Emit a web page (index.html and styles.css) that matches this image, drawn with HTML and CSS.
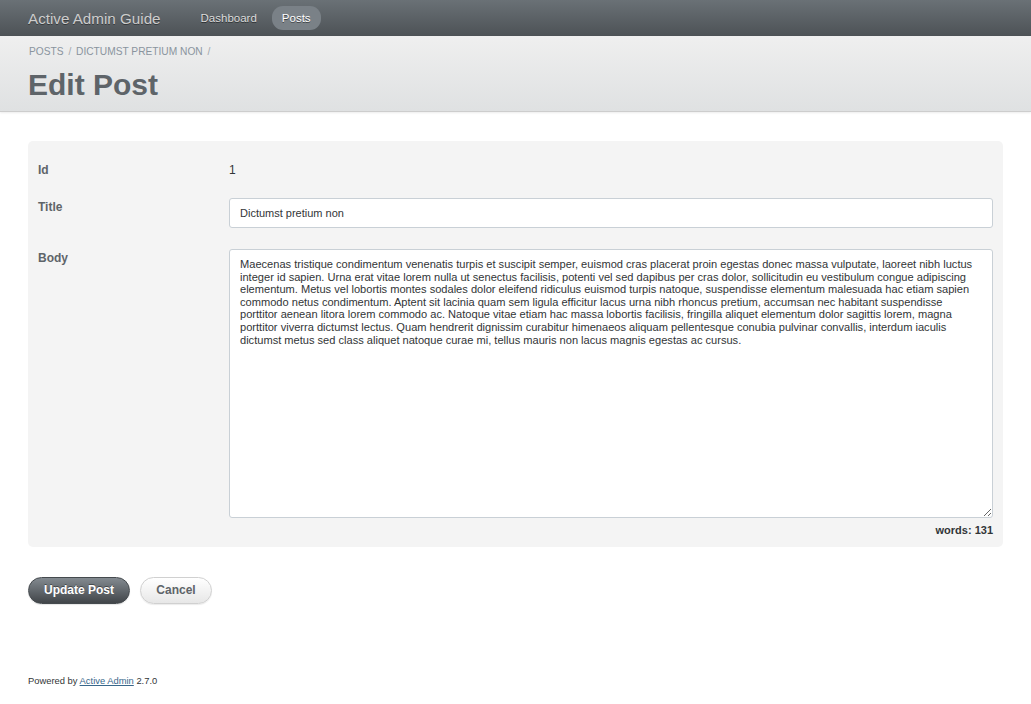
FILE: index.html
```html
<!DOCTYPE html>
<html lang="en">
<head>
    <meta charset="UTF-8">
    <meta name="viewport" content="width=device-width, initial-scale=1.0">
    <link rel="stylesheet" href="styles.css">
    <title>Edit Post | Active Admin Guide</title>
</head>
<body>

    <header class="top-bar">
        <h1 class="site-title">Active Admin Guide</h1>
        <nav class="tabs">
            <a class="tab" href="#">Dashboard</a>
            <a class="tab current" href="#">Posts</a>
        </nav>
    </header>

    <div class="title-bar">
        <div class="breadcrumb">
            <a href="#">Posts</a> <span class="sep">/</span>
            <a href="#">Dictumst pretium non</a> <span class="sep">/</span>
        </div>
        <h2 class="page-title">Edit Post</h2>
    </div>

    <main class="content">
        <form class="post-form">
            <fieldset class="inputs">
                <div class="row">
                    <label class="label">Id</label>
                    <div class="value">1</div>
                </div>
                <div class="row">
                    <label class="label" for="postTitle">Title</label>
                    <input class="field" type="text" id="postTitle" value="Dictumst pretium non">
                </div>
                <div class="row last">
                    <label class="label" for="postBody">Body</label>
                    <div class="field-wrap">
                        <textarea class="field area" id="postBody">Maecenas tristique condimentum venenatis turpis et suscipit semper, euismod cras placerat proin egestas donec massa vulputate, laoreet nibh luctus integer id sapien. Urna erat vitae lorem nulla ut senectus facilisis, potenti vel sed dapibus per cras dolor, sollicitudin eu vestibulum congue adipiscing elementum. Metus vel lobortis montes sodales dolor eleifend ridiculus euismod turpis natoque, suspendisse elementum malesuada hac etiam sapien commodo netus condimentum. Aptent sit lacinia quam sem ligula efficitur lacus urna nibh rhoncus pretium, accumsan nec habitant suspendisse porttitor aenean litora lorem commodo ac. Natoque vitae etiam hac massa lobortis facilisis, fringilla aliquet elementum dolor sagittis lorem, magna porttitor viverra dictumst lectus. Quam hendrerit dignissim curabitur himenaeos aliquam pellentesque conubia pulvinar convallis, interdum iaculis dictumst metus sed class aliquet natoque curae mi, tellus mauris non lacus magnis egestas ac cursus.</textarea>
                        <p class="hint">words: 131</p>
                    </div>
                </div>
            </fieldset>

            <div class="actions">
                <button type="button" class="btn primary">Update Post</button>
                <a href="#" class="btn secondary">Cancel</a>
            </div>
        </form>
    </main>

    <footer class="footer">
        Powered by <a href="#">Active Admin</a> 2.7.0
    </footer>

</body>
</html>
```

FILE: styles.css
```css
body {
    font-family: "Liberation Sans", Arial, Helvetica, sans-serif;
    font-size: 12px;
    margin: 0;
    padding: 0;
    background-color: #ffffff;
    color: #323537;
}

a {
    color: #38678b;
}

.top-bar {
    display: flex;
    align-items: center;
    height: 36px;
    padding: 0 28px;
    background: linear-gradient(180deg, #6a7176 0%, #4d5256 100%);
}

.site-title {
    margin: 0 30px 0 0;
    font-size: 15.2px;
    font-weight: normal;
    color: #cdcdcd;
    text-shadow: 0 1px 0 rgba(0, 0, 0, 0.4);
}

.tabs {
    display: flex;
    gap: 5px;
}

.tab {
    padding: 6px 10px;
    border-radius: 11px;
    font-size: 11.5px;
    color: #dcdcdc;
    text-decoration: none;
    text-shadow: 0 1px 0 rgba(0, 0, 0, 0.5);
}

.tab.current {
    background-color: #7a8187;
    color: #ffffff;
}

.title-bar {
    height: 76px;
    padding: 0 28px;
    box-sizing: border-box;
    background: linear-gradient(180deg, #efefef 0%, #dfe1e2 100%);
    border-bottom: 1px solid #cdcdcd;
    box-shadow: 0 1px 2px rgba(0, 0, 0, 0.08);
}

.breadcrumb {
    padding-top: 10px;
    padding-left: 1px;
    font-size: 10.2px;
    text-transform: uppercase;
    color: #a0a6ab;
}

.breadcrumb a {
    color: #8a949e;
    text-decoration: none;
}

.breadcrumb .sep {
    margin: 0 2px;
}

.page-title {
    margin: 11px 0 0;
    font-size: 30px;
    font-weight: bold;
    color: #5e6469;
}

.content {
    padding: 29px 28px 0;
}

.inputs {
    margin: 0;
    padding: 10px;
    border: 0;
    border-radius: 5px;
    background-color: #f4f4f4;
}

.row {
    display: flex;
    align-items: flex-start;
    padding: 10px 0;
}

.row:first-child {
    padding-bottom: 9px;
}

.row.last {
    padding-top: 11px;
    padding-bottom: 0;
}

.label {
    width: 20%;
    flex-shrink: 0;
    font-weight: bold;
    color: #5e6469;
    line-height: 18px;
}

.value {
    line-height: 18px;
    color: #323537;
}

.field-wrap {
    flex: 1;
}

.field {
    flex: 1;
    box-sizing: border-box;
    height: 30px;
    padding: 7px 10px;
    border: 1px solid #c9d0d6;
    border-radius: 3px;
    background: #ffffff;
    font-family: inherit;
    font-size: 11px;
    color: #323537;
}

.area {
    display: block;
    width: 100%;
    height: 269px;
    font-size: 11.08px;
    line-height: 12.6px;
    padding: 8px 13px 8px 10px;
    resize: vertical;
}

.hint {
    margin: 5px 0 0;
    text-align: right;
    font-size: 11px;
    font-weight: bold;
    line-height: 14px;
    color: #323537;
}

.actions {
    display: flex;
    gap: 10px;
    margin-top: 30px;
}

.btn {
    display: inline-block;
    box-sizing: border-box;
    height: 27px;
    padding: 0;
    border-radius: 200px;
    font-family: inherit;
    font-size: 12px;
    font-weight: bold;
    line-height: 25px;
    text-align: center;
    white-space: nowrap;
    text-decoration: none;
    cursor: pointer;
}

.btn.primary {
    width: 102px;
    border: 1px solid #454a4e;
    background: linear-gradient(180deg, #838a90 0%, #414549 100%);
    color: #ffffff;
    text-shadow: 0 -1px 0 rgba(0, 0, 0, 0.4);
    box-shadow: 0 1px 1px rgba(0, 0, 0, 0.1);
}

.btn.secondary {
    width: 72px;
    border: 1px solid #d0d0d0;
    background: linear-gradient(180deg, #ffffff 0%, #e7e7e7 100%);
    color: #5e6469;
    box-shadow: 0 1px 1px rgba(0, 0, 0, 0.08);
}

.footer {
    padding: 71px 28px 20px;
    font-size: 9.4px;
    color: #323537;
}
```
